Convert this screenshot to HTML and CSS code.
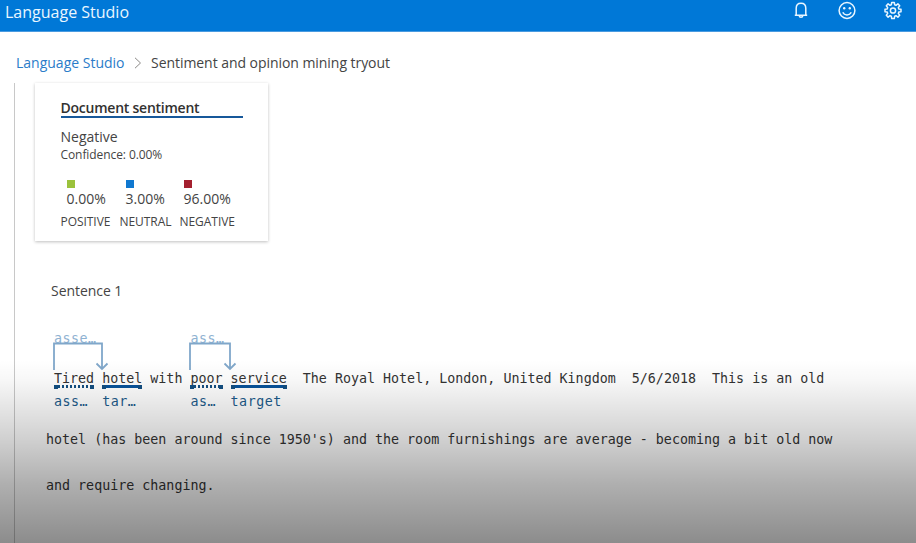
FILE: index.html
```html
<!DOCTYPE html>
<html lang="en">
<head>
<meta charset="utf-8">
<title>Language Studio</title>
<link rel="stylesheet" href="styles.css">
</head>
<body>
<header class="topbar">
  <span class="brand">Language Studio</span>
  <div class="actions">
    <svg width="18" height="20" viewBox="0 0 18 20" fill="none" stroke="currentColor" stroke-width="1.5"><path d="M4.200 15V8.200C4.200 5.200 6.200 3.200 9 3.200s4.800 2 4.800 5V15M2.800 15.300h12.400M7.200 15.600c.2 2.200 3.400 2.200 3.600 0"/></svg>
    <svg width="18" height="20" viewBox="0 0 18 20" fill="none" stroke="currentColor" stroke-width="1.5"><circle cx="9" cy="10.500" r="7.900"/><path d="M4.800 12.300c1.600 3.500 6.800 3.500 8.400 0"/><circle class="dot" cx="6.200" cy="8.300" r="1.200"/><circle class="dot" cx="11.800" cy="8.300" r="1.200"/></svg>
    <svg width="18" height="20" viewBox="-9 -10.500 18 20" fill="none" stroke="currentColor" stroke-width="1.500" stroke-linejoin="round"><path d="M-1.300-8h2.600l.4 2.300 1.300.5 1.900-1.400 1.800 1.800-1.400 1.900.5 1.300 2.200.4v2.400l-2.200.4-.5 1.300 1.400 1.900-1.800 1.800-1.900-1.400-1.300.5-.4 2.300h-2.600l-.4-2.300-1.300-.5-1.900 1.400-1.800-1.800 1.400-1.900-.5-1.300-2.200-.4v-2.400l2.200-.4.500-1.300-1.400-1.900 1.800-1.800 1.900 1.400 1.300-.5z"/><circle r="2.600"/></svg>
  </div>
</header>
<nav class="breadcrumb">
  <a class="crumb-link">Language Studio</a>
  <svg class="chevron" width="8" height="12" viewBox="0 0 8 12" fill="none" stroke="currentColor"><path d="M1 .8 6.500 6 1 11.200"/></svg>
  <span class="crumb-current">Sentiment and opinion mining tryout</span>
</nav>
<main class="content">
  <section class="card">
    <h2 class="card-title"><span>Document sentiment</span></h2>
    <div class="verdict">Negative</div>
    <div class="confidence">Confidence: 0.00%</div>
    <div class="scores">
      <div class="score positive"><i class="swatch"></i><span class="value">0.00%</span><span class="name">POSITIVE</span></div>
      <div class="score neutral"><i class="swatch"></i><span class="value">3.00%</span><span class="name">NEUTRAL</span></div>
      <div class="score negative"><i class="swatch"></i><span class="value">96.00%</span><span class="name">NEGATIVE</span></div>
    </div>
  </section>
  <h3 class="sentence-title">Sentence 1</h3>
  <div class="sentence">
    <div class="line first"><span class="token assessment">Tired<span class="tag">ass…</span><span class="relation">asse…</span><svg class="arrow" width="56" height="30" viewBox="0 0 56 30"><path d="M1 28V1.500h48V27M43.500 21.500l5.500 5.500 5.500-5.500"/></svg></span> <span class="token target">hotel<span class="tag">tar…</span></span> with <span class="token assessment">poor<span class="tag">as…</span><span class="relation">ass…</span><svg class="arrow" width="48" height="30" viewBox="0 0 48 30"><path d="M1 28V1.500h40V27M35.500 21.500l5.500 5.500 5.500-5.500"/></svg></span> <span class="token target">service<span class="tag">target</span></span>  The Royal Hotel, London, United Kingdom  5/6/2018  This is an old</div>
    <div class="line second">hotel (has been around since 1950's) and the room furnishings are average - becoming a bit old now</div>
    <div class="line third">and require changing.</div>
  </div>
</main>
<div class="shade"></div>
</body>
</html>
```

FILE: styles.css
```css
* { box-sizing: border-box; }
body {
  margin: 0;
  height: 543px;
  overflow: hidden;
  display: flex;
  flex-direction: column;
  background: #fff;
  color: #444;
  font-family: "Open Sans", "Noto Sans", sans-serif;
}
.topbar {
  flex: none;
  height: 32px;
  padding: 0 14px 0 5px;
  display: flex;
  justify-content: space-between;
  background: #0078d7;
  border-bottom: 1px solid #4a9be0;
  color: #e9f6ff;
}
.brand { font-size: 16px; line-height: 24px; }
.actions { display: flex; gap: 28px; }
.dot { fill: currentColor; stroke: none; }
.breadcrumb {
  flex: none;
  height: 51px;
  padding: 10px 16px 0;
  display: flex;
  align-items: center;
  font-size: 14px;
  line-height: 20px;
}
.crumb-link { width: 108px; color: #2b7cc9; white-space: nowrap; }
.chevron { margin: 0 9px 0 10px; color: #8a8886; }
.crumb-current { white-space: nowrap; letter-spacing: -0.050px; }
.content {
  flex: 1;
  margin-left: 14px;
  padding-left: 20px;
  border-left: 1px solid #c8c8c8;
}
.card {
  width: 233px;
  height: 158px;
  padding: 14px 26px 0 25.500px;
  background: #fff;
  box-shadow: 0 1px 3px rgba(0, 0, 0, .25);
}
.card-title {
  margin: 0;
  width: 182px;
  height: 21px;
  border-bottom: 2px solid #17589a;
  font-size: 14px;
  font-weight: 600;
  line-height: 21px;
  letter-spacing: -0.240px;
  color: #323130;
  white-space: nowrap;
}
.verdict { margin-top: 9px; font-size: 14px; line-height: 20px; }
.confidence { margin-top: 1px; font-size: 12px; line-height: 14px; letter-spacing: -0.080px; }
.scores { display: flex; margin-top: 18px; }
.score { display: flex; flex-direction: column; width: 59px; white-space: nowrap; }
.swatch { width: 8px; height: 8px; margin-left: 6px; }
.positive .swatch { background: #9bc23c; }
.neutral .swatch { background: #0f78d0; }
.negative .swatch { background: #a4202f; }
.value { margin-left: 6px; font-size: 14px; line-height: 20px; margin-top: 1px; }
.name { font-size: 12px; line-height: 16px; margin-top: 5px; letter-spacing: -0.050px; }
.negative { margin-left: 1px; }
.negative .swatch, .negative .value { margin-left: 4px; }
.sentence-title {
  margin: 40px 0 0 16px;
  font-size: 14px;
  font-weight: 400;
  line-height: 20px;
  letter-spacing: -0.050px;
}
.sentence {
  margin-top: 68px;
  padding-left: 11px;
  font-family: "DejaVu Sans Mono", "Liberation Mono", monospace;
  font-size: 13.330px;
  color: #333;
}
.line { height: 20px; line-height: 20px; white-space: pre; }
.first { padding-left: 8px; }
.second { margin-top: 41px; }
.third { margin-top: 26px; }
.token { position: relative; display: inline-block; height: 20px; }
.token::before, .token::after {
  content: "";
  position: absolute;
  left: 0;
  right: 0;
  top: 16px;
}
.token::before { height: 3px; background: #07539b; }
.assessment::before { background: repeating-linear-gradient(90deg, #134f82 0 2px, transparent 2px 4px); }
.token::after {
  height: 4px;
  border: solid #134f82;
  border-width: 0 4px;
}
.tag { position: absolute; left: 0; top: 23px; color: #1d5c8c; letter-spacing: .5px; }
.relation { position: absolute; left: 0; top: -40px; color: #8fb2d2; letter-spacing: .5px; }
.arrow {
  position: absolute;
  left: -1px;
  top: -27px;
  fill: none;
  stroke: #80a7ca;
  stroke-width: 1.800;
}
.shade {
  position: absolute;
  inset: 360px 0 0;
  pointer-events: none;
  background: linear-gradient(rgba(0, 0, 0, 0), rgba(0, 0, 0, .03) 11%, rgba(0, 0, 0, .19) 44%, rgba(0, 0, 0, .31) 67%, rgba(0, 0, 0, .45));
}
```
